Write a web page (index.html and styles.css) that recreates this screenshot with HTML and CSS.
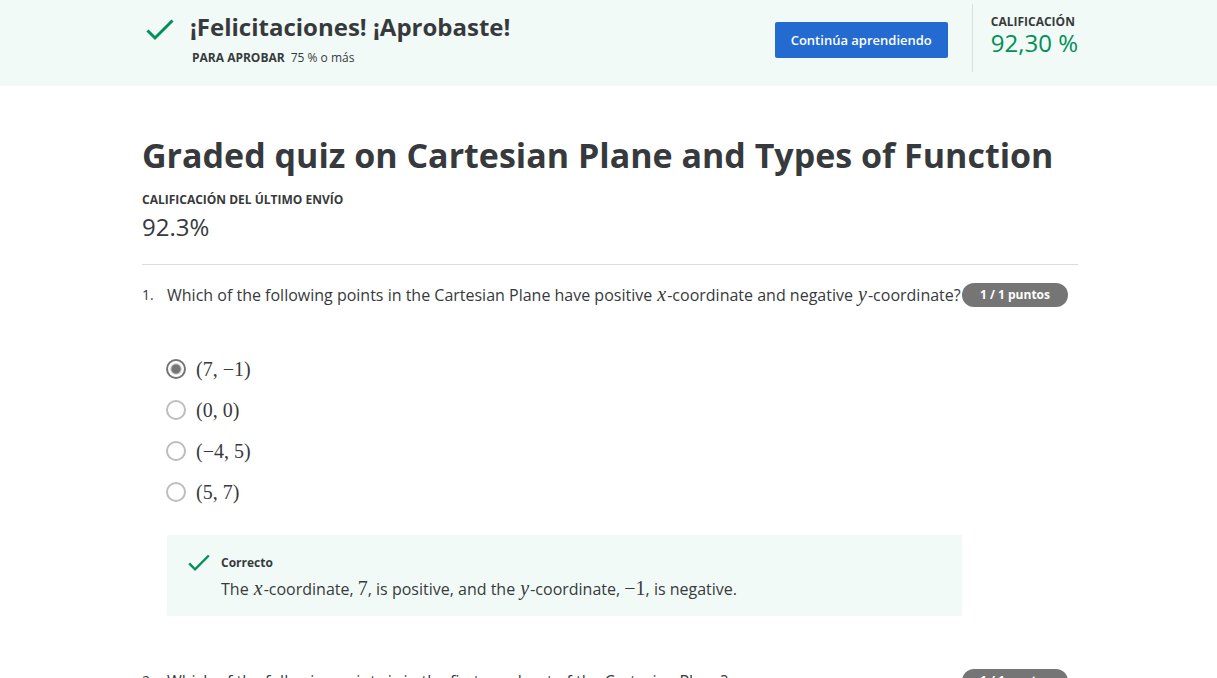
FILE: index.html
```html
<!DOCTYPE html>
<html lang="es">
<head>
<meta charset="utf-8">
<meta name="viewport" content="width=device-width, initial-scale=1">
<title>Graded quiz on Cartesian Plane and Types of Function</title>
<link rel="stylesheet" href="styles.css">
</head>
<body>
<header class="banner">
  <svg class="banner-check" viewBox="0 0 28 22" aria-hidden="true"><path d="M1.5 11.5L9 19L26.5 1.5"/></svg>
  <div class="banner-text">
    <h2 class="banner-title">¡Felicitaciones! ¡Aprobaste!</h2>
    <p class="banner-pass"><strong>PARA APROBAR</strong><span>75 % o más</span></p>
  </div>
  <button class="continue" type="button">Continúa aprendiendo</button>
  <div class="grade">
    <span class="label">CALIFICACIÓN</span>
    <span class="grade-value">92,30 %</span>
  </div>
</header>
<main class="content">
  <h1 class="title">Graded quiz on Cartesian Plane and Types of Function</h1>
  <div class="latest">
    <span class="label">CALIFICACIÓN DEL ÚLTIMO ENVÍO</span>
    <span class="latest-value">92.3%</span>
  </div>
  <ol class="questions">
    <li class="question">
      <span class="number">1.</span>
      <div class="body">
        <p class="prompt" id="q1">Which of the following points in the Cartesian Plane have positive <i class="var">x</i>-coordinate and negative <i class="var">y</i>-coordinate?</p>
        <div class="options" role="radiogroup" aria-labelledby="q1">
          <label class="option"><input class="radio" type="radio" name="q1" checked><span class="math">(7, −1)</span></label>
          <label class="option"><input class="radio" type="radio" name="q1"><span class="math">(0, 0)</span></label>
          <label class="option"><input class="radio" type="radio" name="q1"><span class="math">(−4, 5)</span></label>
          <label class="option"><input class="radio" type="radio" name="q1"><span class="math">(5, 7)</span></label>
        </div>
        <div class="feedback">
          <svg class="feedback-check" viewBox="0 0 28 22" aria-hidden="true"><path d="M1.5 11.5L9 19L26.5 1.5"/></svg>
          <div>
            <strong class="feedback-title">Correcto</strong>
            <p class="feedback-text">The <i class="var">x</i>-coordinate, <span class="math">7</span>, is positive, and the <i class="var">y</i>-coordinate, <span class="math">−1</span>, is negative.</p>
          </div>
        </div>
      </div>
      <span class="points">1 / 1 puntos</span>
    </li>
    <li class="question">
      <span class="number">2.</span>
      <div class="body">
        <p class="prompt">Which of the following points is in the first quadrant of the Cartesian Plane?</p>
      </div>
      <span class="points">1 / 1 puntos</span>
    </li>
  </ol>
</main>
</body>
</html>
```

FILE: styles.css
```css
* {
  box-sizing: border-box;
}

body {
  margin: 0;
  height: 100vh;
  display: flex;
  flex-direction: column;
  background: #fff;
  color: #373a3c;
  font-family: "Open Sans", sans-serif;
  font-size: 16px;
  line-height: 24px;
}

h1, h2, p, ol {
  margin: 0;
  padding: 0;
}

.banner {
  flex: none;
  display: flex;
  align-items: flex-start;
  padding: 4px 139px 14px 146px;
  background: #f2faf7;
}

.banner-check {
  width: 28px;
  height: 22px;
  margin: 15px 16px 0 0;
}

.banner-check path,
.feedback-check path {
  fill: none;
  stroke: #038f58;
  stroke-width: 3;
}

.banner-text {
  flex: 1;
}

.banner-title {
  font-size: 24px;
  line-height: 46px;
  font-weight: 700;
}

.banner-pass {
  display: flex;
  gap: 6px;
  padding-left: 2px;
  font-size: 12px;
  line-height: 16px;
}

.continue {
  height: 36px;
  margin: 18px 24px 0 0;
  padding: 0 16px;
  border: 0;
  border-radius: 2px;
  background: #246bd1;
  color: #fff;
  font: 600 13px/20px "Open Sans", sans-serif;
}

.grade {
  display: flex;
  flex-direction: column;
  height: 68px;
  padding: 9px 0 0 18px;
  border-left: 1px solid #dcdcdc;
}

.label {
  font-size: 12px;
  line-height: 18px;
  font-weight: 700;
}

.grade-value {
  color: #038f58;
  font-size: 24px;
  line-height: 24px;
}

.content {
  flex: 1;
  min-height: 0;
  overflow-y: auto;
  scrollbar-width: none;
  padding: 43px 139px 40px 142px;
}

.title {
  font-size: 34px;
  line-height: 52px;
  font-weight: 700;
}

.latest {
  display: flex;
  flex-direction: column;
  padding: 10px 0 19px;
  border-bottom: 1px solid #dcdcdc;
}

.latest-value {
  font-size: 24px;
  line-height: 36px;
}

.questions {
  list-style: none;
  padding-right: 10px;
}

.question {
  display: flex;
  align-items: flex-start;
  padding: 18px 0 35px;
}

.number {
  flex: none;
  width: 25px;
  font-size: 14px;
}

.body {
  flex: 1;
}

.points {
  flex: none;
  width: 106px;
  border-radius: 12px;
  background: #757575;
  color: #fff;
  font-size: 12px;
  font-weight: 700;
  text-align: center;
}

.math,
.var {
  font-family: "Liberation Serif", serif;
  font-size: 20px;
  line-height: 20px;
}

.var {
  padding: 0 1px;
}

.options {
  display: flex;
  flex-direction: column;
  align-items: flex-start;
  padding: 41px 0 23px;
}

.option {
  display: flex;
  align-items: center;
  gap: 10px;
  height: 41px;
}

.radio {
  appearance: none;
  width: 20px;
  height: 20px;
  margin: 0 0 0 -1px;
  border: 2px solid #bdbdbd;
  border-radius: 50%;
}

.radio:checked {
  border-color: #757575;
  background: radial-gradient(circle, #757575 4px, transparent 6px);
}

.feedback {
  display: flex;
  gap: 11px;
  padding: 16px 21px 12px;
  background: #f2faf7;
}

.feedback-check {
  flex: none;
  width: 22px;
  height: 18px;
  margin-top: 3px;
}

.feedback-title {
  display: block;
  font-size: 12px;
}

.feedback-text {
  line-height: 29px;
}
```
